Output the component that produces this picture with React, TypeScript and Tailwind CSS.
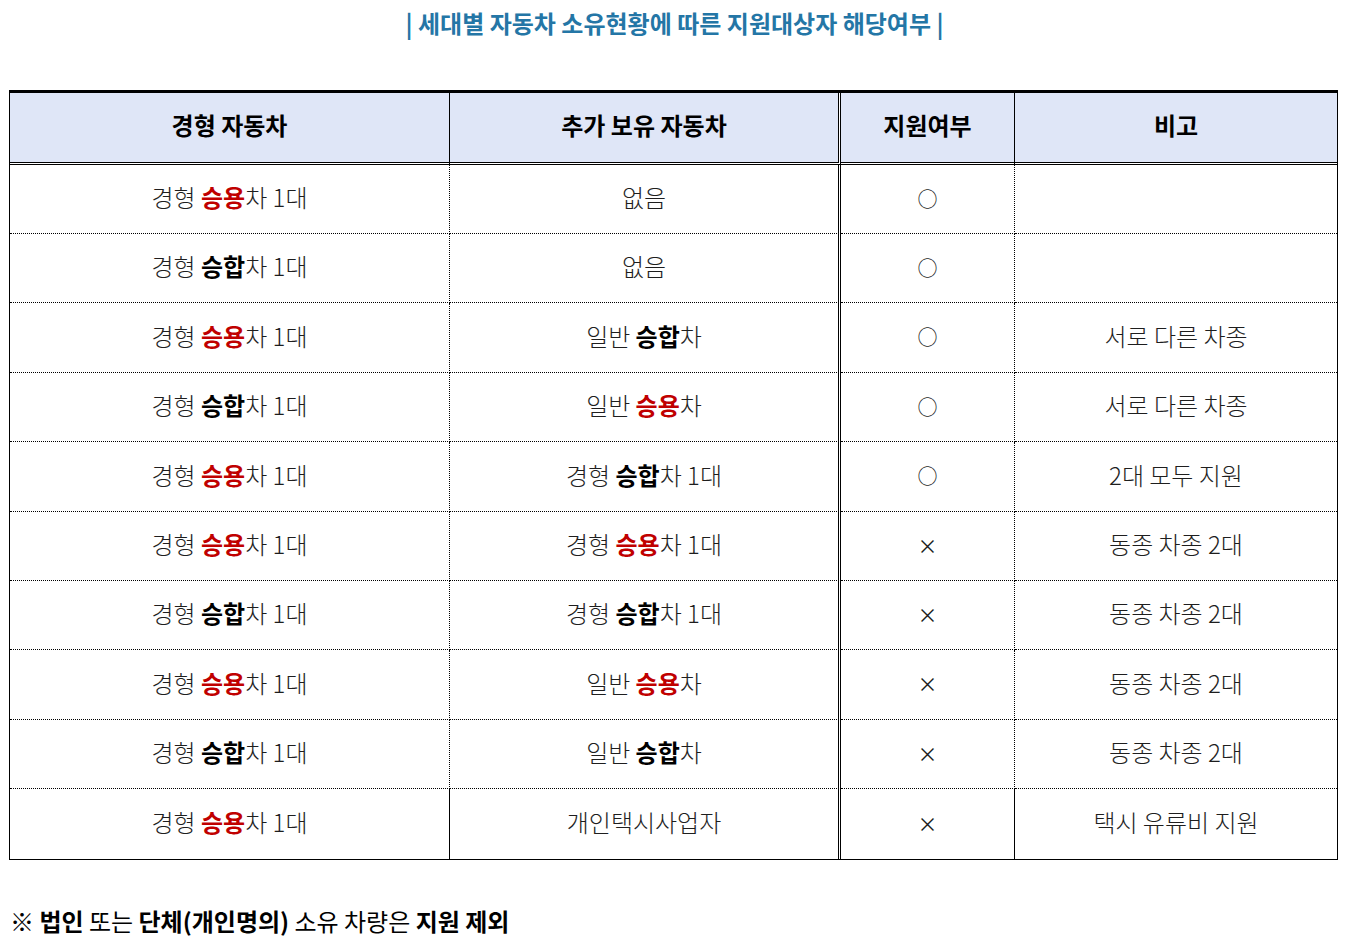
import React from "react";

type Seg = { t: string; k?: "red" | "bold" };
type Row = { a: Seg[]; b: Seg[]; c: string; d: string; h: string };

const sy: Seg[] = [{ t: "경형 " }, { t: "승용", k: "red" }, { t: "차 1대" }];
const sh: Seg[] = [{ t: "경형 " }, { t: "승합", k: "bold" }, { t: "차 1대" }];

const rows: Row[] = [
  { a: sy, b: [{ t: "없음" }], c: "○", d: "", h: "h-[69px]" },
  { a: sh, b: [{ t: "없음" }], c: "○", d: "", h: "h-[69px]" },
  { a: sy, b: [{ t: "일반 " }, { t: "승합", k: "bold" }, { t: "차" }], c: "○", d: "서로 다른 차종", h: "h-[70px]" },
  { a: sh, b: [{ t: "일반 " }, { t: "승용", k: "red" }, { t: "차" }], c: "○", d: "서로 다른 차종", h: "h-[69px]" },
  { a: sy, b: sh, c: "○", d: "2대 모두 지원", h: "h-[70px]" },
  { a: sy, b: sy, c: "×", d: "동종 차종 2대", h: "h-[69px]" },
  { a: sh, b: sh, c: "×", d: "동종 차종 2대", h: "h-[69px]" },
  { a: sy, b: [{ t: "일반 " }, { t: "승용", k: "red" }, { t: "차" }], c: "×", d: "동종 차종 2대", h: "h-[70px]" },
  { a: sh, b: [{ t: "일반 " }, { t: "승합", k: "bold" }, { t: "차" }], c: "×", d: "동종 차종 2대", h: "h-[69px]" },
  { a: sy, b: [{ t: "개인택시사업자" }], c: "×", d: "택시 유류비 지원", h: "h-[70px]" },
];

function Text({ segs }: { segs: Seg[] }) {
  return (
    <span className="whitespace-pre">
      {segs.map((s, i) =>
        s.k === "red" ? (
          <span key={i} className="font-bold text-[#c00000]">{s.t}</span>
        ) : s.k === "bold" ? (
          <span key={i} className="font-bold text-black">{s.t}</span>
        ) : (
          <span key={i}>{s.t}</span>
        )
      )}
    </span>
  );
}

export default function App() {
  return (
    <div
      className="w-[1349px] min-h-[948px] bg-white text-[#1e1e1e]"
      style={{ fontFamily: '"Noto Sans CJK KR", "Noto Sans", sans-serif' }}
    >
      <div className="h-[48px] pb-[3px] flex items-center justify-center text-[24px] leading-none font-semibold text-[#2476a6]">
        | 세대별 자동차 소유현황에 따른 지원대상자 해당여부 |
      </div>

      <div className="mt-[42px] ml-[9px] w-[1329px] border-t-[3px] border-l border-r border-b border-black">
        <div className="grid grid-cols-[440px_391px_174px_322px] h-[72px] text-[24px] leading-none font-bold text-black">
          <div className="flex items-center justify-center pb-[6px] bg-[#dfe6f7] bg-clip-padding border-r border-b-[3px] border-double border-black">
            경형 자동차
          </div>
          <div className="flex items-center justify-center pb-[6px] bg-[#dfe6f7] bg-clip-padding border-r-[3px] border-b-[3px] border-double border-black">
            추가 보유 자동차
          </div>
          <div className="flex items-center justify-center pb-[6px] bg-[#dfe6f7] bg-clip-padding border-r border-b-[3px] border-double border-black">
            지원여부
          </div>
          <div className="flex items-center justify-center pb-[6px] bg-[#dfe6f7] bg-clip-padding border-b-[3px] border-double border-black">
            비고
          </div>
        </div>
        {rows.map((r, i) => {
          const last = i === rows.length - 1;
          const bb = last ? "" : "border-b border-dotted border-b-black";
          return (
            <div key={i} className={`grid grid-cols-[440px_391px_174px_322px] text-[24px] leading-none font-light ${r.h}`}>
              <div className={`flex items-center justify-center pb-[4px] border-r border-r-black ${bb}`}>
                <Text segs={r.a} />
              </div>
              <div className={`flex items-center justify-center pb-[4px] border-r-[3px] border-r-black [border-right-style:double] ${bb}`}>
                <Text segs={r.b} />
              </div>
              <div className={`flex items-center justify-center pb-[1px] border-r border-r-black text-[20px] font-normal ${bb}`}>
                {r.c}
              </div>
              <div className={`flex items-center justify-center pb-[4px] ${bb}`}>{r.d}</div>
            </div>
          );
        })}
      </div>

      <div className="mt-[47px] ml-[10px] h-[30px] pb-[2px] flex items-center text-[24px] leading-none text-black whitespace-pre">
        <span>※ </span>
        <span className="font-bold">법인</span>
        <span> 또는 </span>
        <span className="font-bold">단체(개인명의)</span>
        <span> 소유 차량은 </span>
        <span className="font-bold">지원 제외</span>
      </div>
    </div>
  );
}
